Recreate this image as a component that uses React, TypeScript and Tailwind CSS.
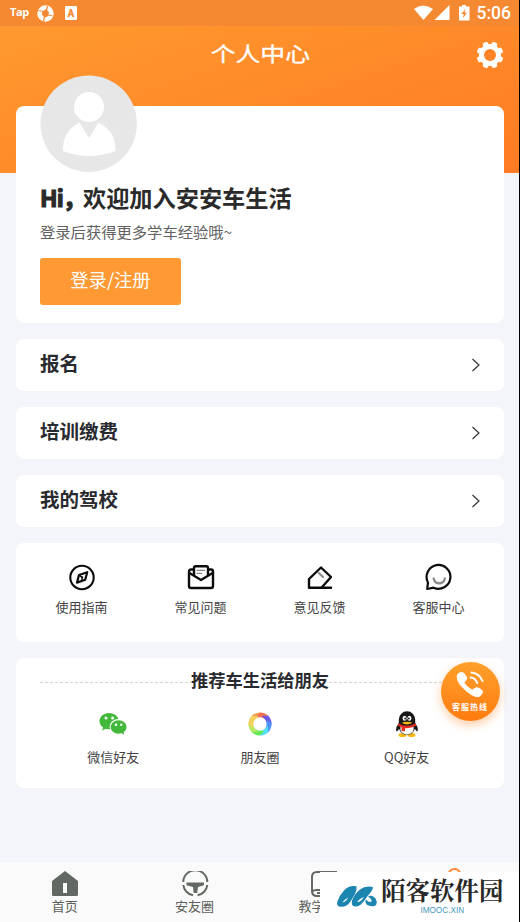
import React from 'react';

interface Entry {
  label: string;
  icon: React.ReactNode;
}

const rows = ['报名', '培训缴费', '我的驾校'];

const CompassIcon = () => (
  <svg className="h-7 w-7" viewBox="0 0 28 28" fill="none" stroke="#0c0c0c" strokeWidth="2.1" strokeLinejoin="round">
    <circle cx="14" cy="14.5" r="11.7" />
    <path d="M19.2 9.2 17.2 16.8 9 19.6 11 12Z" strokeWidth="2.2" />
    <path d="M11.2 12 14 14.4V17.8" strokeWidth="1.5" />
    <circle cx="14.3" cy="14.2" r="1" fill="#0c0c0c" stroke="none" />
  </svg>
);

const MailIcon = () => (
  <svg className="h-7 w-7" viewBox="0 0 28 28" fill="none" stroke="#0c0c0c" strokeWidth="2.4" strokeLinejoin="round" strokeLinecap="round">
    <path d="M6 6.500H4Q2 6.500 2 8.500V23Q2 25 4 25H24Q26 25 26 23V8.500Q26 6.500 24 6.500H22" />
    <path d="M7 12V5Q7 3.300 8.700 3.300H19.300Q21 3.300 21 5V12" />
    <path d="M2.500 10 14 17 25.500 10" />
    <path d="M10 7.300H17.500M10 10.300H14.500" stroke="#888" strokeWidth="1.300" />
  </svg>
);

const EditIcon = () => (
  <svg className="h-7 w-7" viewBox="0 0 28 28" fill="none" stroke="#0c0c0c" strokeWidth="2.4" strokeLinejoin="round" strokeLinecap="round">
    <path d="M15 4.500 3 16V24.800H15.500L25 14Z" />
    <path d="M15.500 24.800H25" />
    <path d="M12.800 10 17 14" stroke="#8c8c8c" strokeWidth="2.2" />
  </svg>
);

const ServiceIcon = () => (
  <svg className="h-7 w-7" viewBox="0 0 28 28" fill="none" stroke="#0c0c0c" strokeWidth="2.2" strokeLinejoin="round" strokeLinecap="round">
    <path d="M2.200 26 3 19.500A11.900 11.900 0 1 1 8.500 24.700Z" />
    <path d="M8.700 15.500Q9.500 20.300 14.200 20.300T19.800 15.500" stroke="#8c8c8c" strokeWidth="2.300" />
  </svg>
);

const WechatIcon = () => (
  <svg className="h-7 w-7" viewBox="0 0 28 28">
    <path d="M10.200 3C4.800 3 .5 6.600.5 11.200c0 2.500 1.300 4.700 3.600 6.300L3.200 20.600l3.500-1.900c1.100.4 2.300.6 3.500.6 5.400 0 9.700-3.600 9.700-8.100S15.600 3 10.200 3Z" fill="#43b93c" />
    <ellipse cx="19.600" cy="17" rx="9" ry="8" fill="#fff" />
    <path d="M19.600 10.200c-4.400 0-7.900 3-7.900 6.800s3.500 6.700 7.900 6.700c1 0 2-.2 2.900-.4l2.700 1.500-.7-2.500c1.900-1.200 3-3.100 3-5.300 0-3.800-3.500-6.800-7.900-6.800Z" fill="#43b93c" />
    <g fill="#fff">
      <circle cx="7" cy="8" r="1.500" />
      <circle cx="13.600" cy="8" r="1.500" />
      <circle cx="17" cy="14.800" r="1.200" />
      <circle cx="22.300" cy="14.800" r="1.200" />
    </g>
  </svg>
);

const petals = ['#f0a15c', '#ef6d55', '#6b5be8', '#4e92f3', '#53dff4', '#61e955', '#b5e963', '#f2d25b'];

const MomentsIcon = () => (
  <svg className="h-7 w-7" viewBox="0 0 28 28">
    {petals.map((color, i) => (
      <path key={color} d="M5.800 5.800A11.600 11.600 0 0 1 14 2.400L18.500 7.500 10.500 8.500 6 12Z" fill={color} transform={`rotate(${i * 45} 14 14)`} />
    ))}
    <circle cx="14" cy="14" r="6.700" fill="#fff" />
  </svg>
);

const QQIcon = () => (
  <svg className="h-7 w-7" viewBox="0 0 28 28">
    <path d="M7 12C4.500 14.500 2.500 18 3.300 21q1 .8 2.700-2h16q1.700 2.800 2.700 2C25.500 18 23.500 14.500 21 12Z" fill="#171717" />
    <ellipse cx="9.500" cy="25" rx="4" ry="2" fill="#f9b817" />
    <ellipse cx="18.500" cy="25" rx="4" ry="2" fill="#f9b817" />
    <path d="M5.800 12V9.500a8.200 8.200 0 0 1 16.400 0V16c0 5-3.200 8.800-8.200 8.800S5.800 21 5.800 16Z" fill="#171717" />
    <path d="M7.500 16h13q1.300 8-6.500 8.500Q6.200 24 7.500 16Z" fill="#fff" />
    <path d="M5.200 13.200Q14 18.200 22.800 13.200L23.200 15.800Q18 18.600 12 18.200V21.300L8.600 21V17.300L5 15.800Z" fill="#e52b22" />
    <ellipse cx="11.600" cy="8.300" rx="2" ry="2.500" fill="#fff" />
    <ellipse cx="16.400" cy="8.300" rx="2" ry="2.500" fill="#fff" />
    <circle cx="12.200" cy="8.500" r=".9" fill="#111" />
    <circle cx="15.800" cy="8.500" r=".9" fill="#111" />
    <path d="M8.500 12.800Q14 10.500 19.500 12.800Q14 16 8.500 12.800Z" fill="#f9b817" />
  </svg>
);

const tools: Entry[] = [
  { label: '使用指南', icon: <CompassIcon /> },
  { label: '常见问题', icon: <MailIcon /> },
  { label: '意见反馈', icon: <EditIcon /> },
  { label: '客服中心', icon: <ServiceIcon /> },
];

const shares: Entry[] = [
  { label: '微信好友', icon: <WechatIcon /> },
  { label: '朋友圈', icon: <MomentsIcon /> },
  { label: 'QQ好友', icon: <QQIcon /> },
];

const tabs: Entry[] = [
  {
    label: '首页',
    icon: (
      <svg className="h-[26px] w-7" viewBox="0 0 28 26">
        <path d="M14 0 27 10V23.500Q27 25 25.500 25H2.500Q1 25 1 23.500V10ZM12 12V22H16V12Z" fill="#626862" fillRule="evenodd" />
      </svg>
    ),
  },
  {
    label: '安友圈',
    icon: (
      <svg className="h-[26px] w-7" viewBox="0 0 28 26" fill="none" stroke="#626862" strokeWidth="2">
        <path d="M2.300 11A12 11.800 0 0 1 26.300 11M2.300 14A12 11.800 0 0 0 12 24.300M26.300 14A12 11.800 0 0 1 16.600 24.300" />
        <path d="M5.500 11.500H23V14.300L17 16 16.200 22H12.600L12 16 5.500 14.300Z" fill="#626862" stroke="none" />
      </svg>
    ),
  },
  {
    label: '教学',
    icon: (
      <svg className="h-[26px] w-7" viewBox="0 0 28 26" fill="none" stroke="#626862" strokeWidth="2">
        <path d="M27 1H7Q2 1 2 6V20Q2 25 7 25H27M2 21Q3 19 7 19H27M7 22H12" />
      </svg>
    ),
  },
  {
    label: '',
    icon: (
      <svg className="-mt-[3px] h-7 w-7" viewBox="0 0 28 28" fill="none" stroke="#ff8a35" strokeWidth="2">
        <circle cx="14.5" cy="7" r="6" />
        <path d="M3 27Q4 16 14 16T25 27" />
      </svg>
    ),
  },
];

const StatusBar = () => (
  <div className="flex h-[26px] items-center justify-between bg-[#f58932] pr-2 pl-2.5 text-white">
    <div className="flex items-center">
      <span className="w-[27px] pb-[2px] font-['Open_Sans'] text-[11px] leading-5 font-bold tracking-[-0.4px]">Tap</span>
      <svg className="h-[17px] w-[17px]" viewBox="0 0 17 17">
        <circle cx="8.500" cy="8.500" r="8.200" fill="#fff" />
        <path d="M5.200 6.800 9 4 12 7.200 11.300 11 7.700 12.700 5 9.800Z" fill="#f58932" />
        <path d="M1.500 5.500 6 6.500M10.500 1 9.500 5M15.500 11 11.500 10M6.500 16 7.500 12" stroke="#f58932" strokeWidth="1.200" />
      </svg>
      <span className="ml-[11px] flex h-[14px] w-3 items-center justify-center rounded-[1px] bg-white font-['Roboto'] text-[10px] font-black text-[#f58932]">A</span>
    </div>
    <div className="flex items-center">
      <svg className="h-4 w-[58px]" viewBox="0 0 58 16" fill="#fff">
        <path d="M0 4Q9-3 19 4L9.500 15Z" />
        <path d="M20.500 15 35.500 0V15Z" />
        <path d="M45 1.500H48V0H52V1.500H55.500V15.500H45Z" />
        <path d="M51.500 4 47.300 9H49.700L49 13 53 7.800H50.700Z" fill="#f58932" />
      </svg>
      <span className="ml-[5px] pt-px font-['Roboto'] text-[17.500px] leading-[25px] font-medium">5:06</span>
    </div>
  </div>
);

const gearAngles = [22.5, 67.5, 112.5, 157.5];

const Header = () => (
  <header className="h-[173px] bg-linear-to-br from-[#ff9b30] to-[#ff7b23]">
    <StatusBar />
    <div className="flex h-[57px] items-center justify-end pr-[15px]">
      <h1 className="flex-1 pl-[44px] text-center text-[20.200px] text-white [-webkit-text-stroke:0.3px_white]">
        <span className="inline-block scale-x-[1.23]">个人中心</span>
      </h1>
      <svg className="h-7 w-7" viewBox="0 0 28 28">
        <g fill="#fff">
          <circle cx="14" cy="14" r="11" />
          {gearAngles.map((angle) => (
            <rect key={angle} x="11.2" y="0.6" width="5.600" height="26.800" rx="1.500" transform={`rotate(${angle} 14 14)`} />
          ))}
        </g>
        <circle cx="14" cy="14" r="6" fill="#ff8427" />
      </svg>
    </div>
  </header>
);

const ProfileCard = () => (
  <section className="h-[217px] rounded-lg bg-white px-6">
    <svg className="-mt-[31px] block h-[98px] w-[98px]" viewBox="0 0 98 98">
      <circle cx="48.700" cy="48.700" r="48.200" fill="#e7e7e7" />
      <g fill="#fff">
        <circle cx="49" cy="32" r="15" />
        <path d="M39.500 47.500 49 63 58.500 47.500Q76 56 75.500 76 49 86 23 76 22.500 56 39.500 47.500Z" />
      </g>
    </svg>
    <h2 className="mt-[9px] flex h-[30px] items-center text-[23.200px] font-bold whitespace-nowrap text-[#2a2a2a]">
      <span className="w-[43px] tracking-[-0.8px] [-webkit-text-stroke:1.2px_#2a2a2a]">Hi，</span>
      欢迎加入安安车生活
    </h2>
    <p className="mt-[7px] text-[15.300px] leading-6 text-[#616161]">登录后获得更多学车经验哦~</p>
    <button className="mt-[14.500px] flex h-[47px] w-[141px] items-center justify-center rounded-[3px] bg-[#ff9933] pb-[2px] text-[18.300px] text-white">登录/注册</button>
  </section>
);

const Dashes = () => (
  <svg className="mt-1 h-px flex-1" stroke="#d4d4d4">
    <path d="M0 .5H180" strokeDasharray="3 2" />
  </svg>
);

const TabBar = () => (
  <nav className="flex h-[60px] bg-[#fafafa] text-[13px] text-[#5c5f5c]">
    {tabs.map((tab, i) => (
      <div key={i} className="flex w-[130px] flex-col items-center pt-[9px]">
        {tab.icon}
        {tab.label && (
          <span className={i === 2 ? '-mt-px w-[52px] leading-5' : '-mt-px leading-5'}>{tab.label}</span>
        )}
      </div>
    ))}
  </nav>
);

const HotlineButton = () => (
  <div className="absolute top-[661.500px] left-[440.500px] flex h-[59px] w-[59px] flex-col items-center rounded-full bg-linear-to-b from-[#ffa02b] to-[#ff7b0d] pt-[9px] text-white shadow-[0_4px_10px_rgba(255,129,34,0.4)]">
    <svg className="h-[28px] w-[30px]" viewBox="0 0 30 28">
      <path d="M2.500 3Q5.500-.5 9 2Q13 6 12 8.500L9.500 11.500Q12 16 17.500 18.500L20.500 16.500Q24 15.500 27.500 19.500Q29 22 25 25.500Q20 28 11 20Q-1 10 2.500 3Z" fill="#fff" />
      <path d="M15.500 6.500Q20.500 7 22.200 12M16.500 1.500Q24.500 2.500 27.500 10" fill="none" stroke="#fff" strokeWidth="2" strokeLinecap="round" />
    </svg>
    <span className="mt-[2px] text-[8px] leading-3 font-bold tracking-[1px]">客服热线</span>
  </div>
);

const Watermark = () => (
  <div className="absolute top-[872px] left-[320px] flex h-[50px] w-[200px] bg-white pl-4">
    <svg className="mt-3 h-6 w-[42px]" viewBox="0 0 42 24" fill="#1c86b1">
      <path d="M20.500 2.300Q13 1 8 6.500Q3.500 11 1.200 18Q.3 22.500 5 22.800Q11 23 14.500 17.500L19 10Q21 6.500 20.500 2.300ZM12.500 13.500Q9.500 18.300 6.500 18.300Q8.500 15.500 12.500 13.500Z" fillRule="evenodd" />
      <path d="M37 3Q29 1.500 24 5.500Q18.500 10 16 16.500Q14.500 22.500 20 22.500Q24.500 22 28 17Q31 12.500 34.500 8.500Q36.800 6 37 3ZM28 13Q24.500 18.500 21 18Q23.500 14.500 28 13Z" fillRule="evenodd" />
      <path d="M32 12.500Q36.500 10.500 39.500 14.500Q42.500 20 38.500 22Q34 23 30.500 20.500Q28.800 18 29.800 15.500Q33 19 35.500 17.500Q36 15 32 12.500Z" />
    </svg>
    <div className="ml-[3px] flex flex-col items-center">
      <span className="font-['Noto_Serif_CJK_SC','Noto_Sans_CJK_SC',serif] text-[24.500px] leading-[36px] font-bold whitespace-nowrap text-[#292929]">陌客软件园</span>
      <span className="-mt-[2px] font-['Liberation_Sans'] text-[8.200px] leading-[10px] text-[#3f98bb]">IMOOC.XIN</span>
    </div>
  </div>
);

const App: React.FC = () => {
  return (
    <div className="relative h-[922px] w-[520px] overflow-hidden border-r border-black bg-[#f4f5fa] font-['Noto_Sans_CJK_SC',sans-serif]">
      <Header />

      <main className="-mt-[67px] flex h-[756px] flex-col gap-4 pr-[15px] pl-4">
        <ProfileCard />

        {rows.map((row) => (
          <div key={row} className="flex h-[52px] items-center justify-between rounded-lg bg-white pr-[23px] pl-6">
            <span className="pb-[5px] text-[19.500px] font-bold text-[#292a2f]">{row}</span>
            <svg className="h-[14px] w-[10px]" viewBox="0 0 10 14" fill="none" stroke="#333" strokeWidth="1.200">
              <path d="M1.500 1 8 7 1.500 13" />
            </svg>
          </div>
        ))}

        <section className="flex h-[99px] rounded-lg bg-white px-[6px] pt-5">
          {tools.map((tool) => (
            <div key={tool.label} className="flex flex-1 flex-col items-center">
              {tool.icon}
              <span className="mt-1.5 text-[13px] leading-5 text-[#444]">{tool.label}</span>
            </div>
          ))}
        </section>

        <section className="h-[130px] rounded-lg bg-white px-6 pt-2">
          <div className="flex h-7 items-center">
            <Dashes />
            <h3 className="pb-px text-[17.300px] font-bold whitespace-nowrap text-[#292a2f]">推荐车生活给朋友</h3>
            <Dashes />
          </div>
          <div className="mt-4 flex">
            {shares.map((share) => (
              <div key={share.label} className="flex flex-1 flex-col items-center">
                {share.icon}
                <span className="mt-[9px] text-[13px] leading-5 text-[#444]">{share.label}</span>
              </div>
            ))}
          </div>
        </section>
      </main>

      <TabBar />
      <HotlineButton />
      <Watermark />
    </div>
  );
};

export default App;
